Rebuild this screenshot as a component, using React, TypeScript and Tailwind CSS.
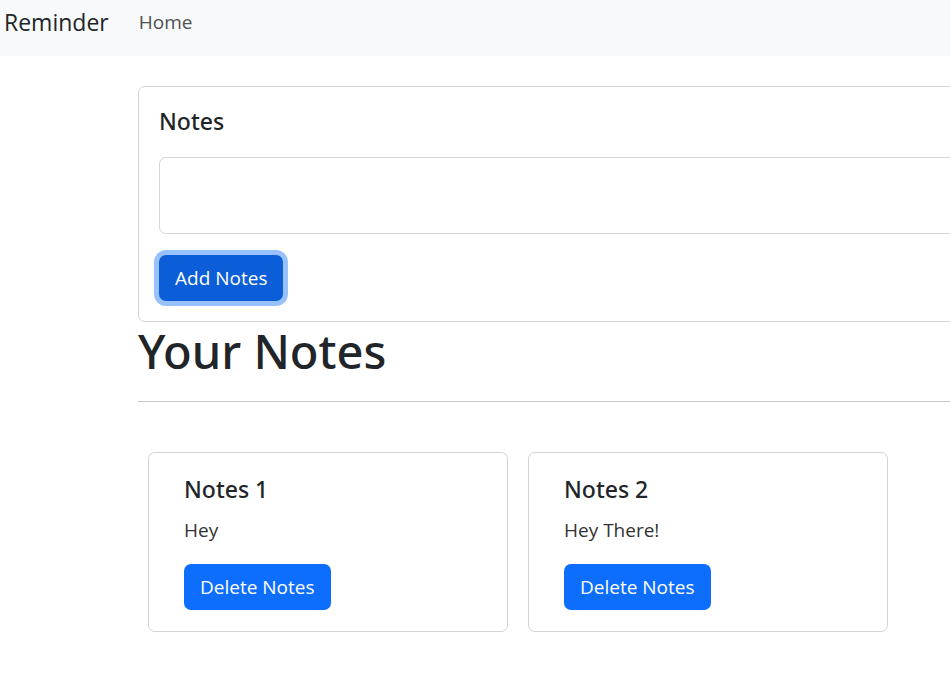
export default function App() {
  const notes = [
    { title: "Notes 1", body: "Hey" },
    { title: "Notes 2", body: "Hey There!" },
  ];

  return (
    <div className="min-h-screen w-full overflow-hidden bg-white font-['Open_Sans',sans-serif] text-[#212529]">
      <nav className="flex h-[56px] items-start bg-[#f8f9fa]">
        <a className="pl-1 text-[23px] leading-[44px] text-[#212529]">Reminder</a>
        <a className="ml-[30px] text-[19px] leading-[44px] text-[#505050]">Home</a>
      </nav>

      <main className="pl-[138px] pt-[30px]">
        <div className="w-[880px] rounded-[7px] border border-[#d3d3d3] px-5 pb-5 pt-[20px]">
          <h5 className="font-['Noto_Sans',sans-serif] text-[23px] font-medium leading-[29px]">Notes</h5>
          <textarea className="mt-[21px] block h-[77px] w-full resize-none rounded-[7px] border border-[#d6d6d6] outline-none" />
          <button className="mt-[21px] block h-[46px] rounded-[7px] bg-[#0b5ed7] px-4 text-[19px] leading-[28px] text-white shadow-[0_0_0_5px_#98c1fe]">
            Add Notes
          </button>
        </div>

        <h1 className="font-['Noto_Sans',sans-serif] text-[47px] font-medium leading-[58px]">Your Notes</h1>
        <hr className="mt-[21px] w-[880px] border-t border-[#c8c8c8]" />

        <div className="ml-[10px] mt-[50px] flex gap-5">
          {notes.map((n) => (
            <div
              key={n.title}
              className="h-[180px] w-[360px] rounded-[7px] border border-[#d3d3d3] pl-[35px] pt-[22px]"
            >
              <h5 className="font-['Noto_Sans',sans-serif] text-[23px] font-medium leading-[29px]">{n.title}</h5>
              <p className="mt-3 text-[19px] leading-[29px] text-[#333]">{n.body}</p>
              <button className="mt-[19px] block h-[46px] rounded-[7px] bg-[#0d6efd] px-4 text-[19px] leading-[28px] text-white">
                Delete Notes
              </button>
            </div>
          ))}
        </div>
      </main>
    </div>
  );
}
